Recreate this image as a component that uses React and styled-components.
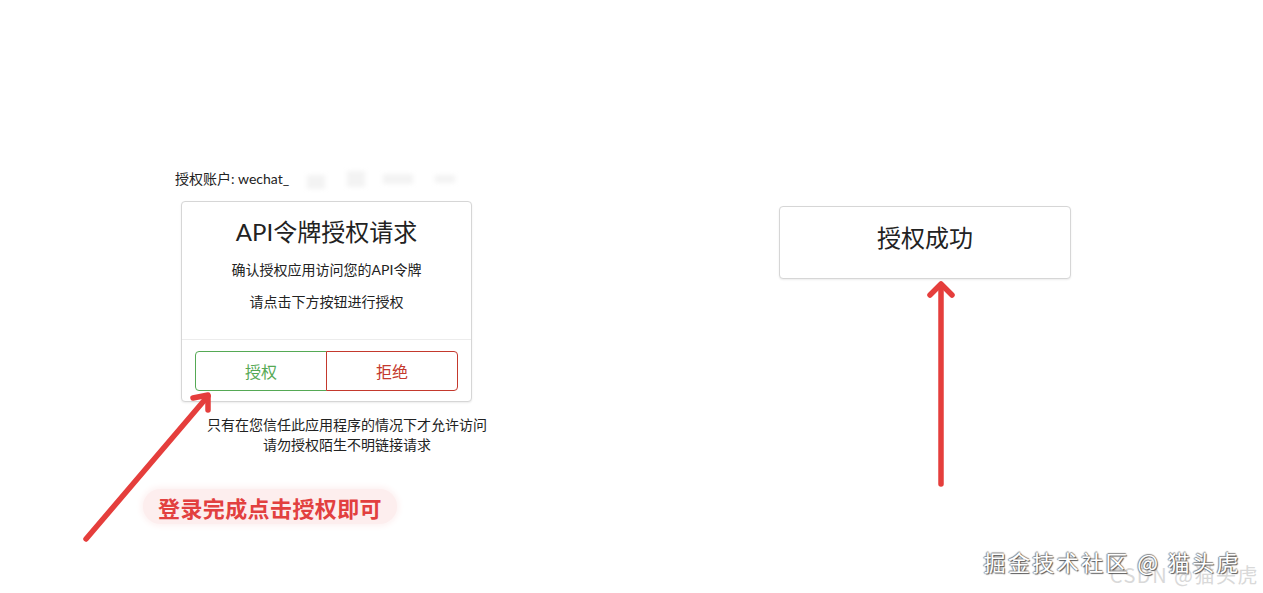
import React from 'react';
import styled, { createGlobalStyle } from 'styled-components';

const GlobalStyle = createGlobalStyle`
  body {
    margin: 0;
    background: #ffffff;
    font-family: "Lato", "Noto Sans CJK SC", sans-serif;
    color: #222;
  }
`;

const Page = styled.div`
  position: relative;
  width: 1263px;
  height: 593px;
  overflow: hidden;
  display: flex;
  align-items: flex-start;
  padding: 170px 0 0 175px;
  box-sizing: border-box;
`;

const LeftColumn = styled.div`
  width: 344px;
  display: flex;
  flex-direction: column;
`;

const Account = styled.div`
  display: flex;
  align-items: center;
  height: 18px;
  font-size: 14px;
  line-height: 18px;
  color: #222;
  white-space: nowrap;
`;

// blurred-out account id
const Smudge = styled.span`
  display: inline-block;
  width: ${(p) => p.w}px;
  height: ${(p) => p.h || 12}px;
  margin-left: ${(p) => p.gap}px;
  margin-top: ${(p) => p.dy || 0}px;
  background: #f3f3f3;
  filter: blur(2px);
`;

const Card = styled.div`
  width: ${(p) => p.width}px;
  margin-left: ${(p) => p.offset || 0}px;
  margin-top: ${(p) => p.top}px;
  box-sizing: border-box;
  border: 1px solid #d6d6d6;
  border-radius: 4px;
  box-shadow: 0 1px 2px rgba(0, 0, 0, 0.08);
  background: #fff;
`;

const CardBody = styled.div`
  padding: ${(p) => p.pad};
  text-align: center;
`;

const Title = styled.div`
  font-size: 24px;
  line-height: 32px;
  color: #222;
`;

const Line = styled.div`
  margin-top: 12px;
  font-size: 14px;
  line-height: 20px;
  color: #222;
`;

const CardFooter = styled.div`
  border-top: 1px solid #ececec;
  padding: 11px 13px 10px;
  display: flex;
`;

const Choice = styled.button`
  flex: 1;
  height: 40px;
  background: #fff;
  font-family: inherit;
  font-size: 16px;
  color: ${(p) => p.color};
  border: 1px solid ${(p) => p.color};
  border-radius: ${(p) => (p.first ? '4px 0 0 4px' : '0 4px 4px 0')};
  ${(p) => (p.first ? '' : 'margin-left: -1px;')}
  cursor: pointer;
`;

const Notice = styled.div`
  margin-top: 13px;
  text-align: center;
  font-size: 14px;
  line-height: 20px;
  color: #222;
`;

const RightColumn = styled.div`
  margin-left: 260px;
`;

const Overlay = styled.svg`
  position: absolute;
  left: 0;
  top: 0;
  pointer-events: none;
`;

const Hint = styled.div`
  position: absolute;
  left: 143px;
  top: 489px;
  width: 254px;
  height: 35px;
  border-radius: 18px;
  background: #fdeeee;
  box-shadow: 0 0 6px 2px #fdf1f1;
  display: flex;
  align-items: center;
  justify-content: center;
  font-family: "Noto Sans CJK SC", sans-serif;
  font-weight: 700;
  font-size: 22px;
  letter-spacing: 0.4px;
  color: #e2403f;
`;

const Watermark = styled.div`
  position: absolute;
  right: ${(p) => p.right}px;
  top: ${(p) => p.top}px;
  font-family: "Noto Sans CJK SC", sans-serif;
  font-size: ${(p) => p.size}px;
  letter-spacing: ${(p) => p.spacing || 0}px;
  white-space: nowrap;
  color: ${(p) => p.color};
  text-shadow: ${(p) => p.shadow || 'none'};
`;

const App = () => (
  <>
    <GlobalStyle />
    <Page>
      <LeftColumn>
        <Account>
          授权账户: wechat_
          <Smudge w={18} h={14} gap={18} dy={6} />
          <Smudge w={18} h={16} gap={22} />
          <Smudge w={30} h={10} gap={18} />
          <Smudge w={20} h={8} gap={22} />
        </Account>
        <Card width={291} offset={6} top={13}>
          <CardBody pad="14px 10px 27px">
            <Title>API令牌授权请求</Title>
            <Line>确认授权应用访问您的API令牌</Line>
            <Line>请点击下方按钮进行授权</Line>
          </CardBody>
          <CardFooter>
            <Choice first color="#55a955">授权</Choice>
            <Choice color="#c4392d">拒绝</Choice>
          </CardFooter>
        </Card>
        <Notice>
          只有在您信任此应用程序的情况下才允许访问
          <br />
          请勿授权陌生不明链接请求
        </Notice>
      </LeftColumn>
      <RightColumn>
        <Card width={292} top={36}>
          <CardBody pad="15px 10px 24px">
            <Title>授权成功</Title>
          </CardBody>
        </Card>
      </RightColumn>

      <Overlay width="1263" height="593" viewBox="0 0 1263 593">
        <g stroke="#e53e3c" strokeWidth="5.5" strokeLinecap="round" strokeLinejoin="round" fill="none">
          <path d="M86 539 L208 396" />
          <path d="M193 398 L208 395 L208 410" />
          <path d="M941 484 L941 286" />
          <path d="M930 295 L941 284 L952 295" />
        </g>
      </Overlay>
      <Hint>登录完成点击授权即可</Hint>

      <Watermark right={4} top={560} size={20} spacing={1.5} color="#d9d9d9">
        CSDN @猫头虎
      </Watermark>
      <Watermark
        right={22}
        top={545}
        size={22}
        spacing={2.4}
        color="#ffffff"
        shadow="1px 1px 1px #555, -1px 0 1px #888, 0 -1px 1px #888"
      >
        掘金技术社区 @ 猫头虎
      </Watermark>
    </Page>
  </>
);

export default App;
